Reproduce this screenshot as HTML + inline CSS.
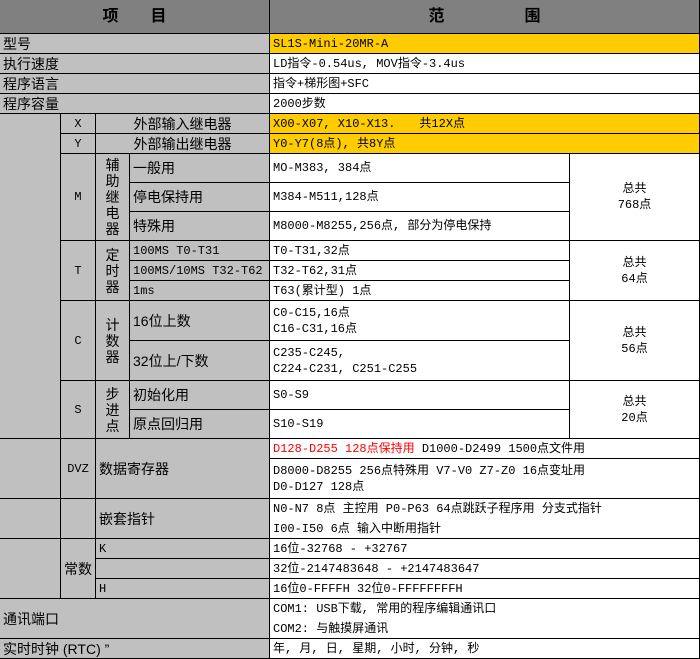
<!DOCTYPE html>
<html><head><meta charset="utf-8"><style>
body{margin:0;width:700px;height:659px;background:#fff;position:relative;overflow:hidden;font-family:"Liberation Sans","Noto Sans CJK SC",sans-serif;font-size:14px;color:#000}
#t{position:absolute;left:0;top:0;width:700px;height:659px;border-left:1px solid #000;border-top:1px solid #000;box-sizing:border-box}
.c{position:absolute;border-right:1px solid #000;border-bottom:1px solid #000;box-sizing:border-box;display:flex;align-items:center;overflow:hidden;white-space:nowrap;padding-left:3px;background:#c0c0c0;line-height:16px}
.w{background:#fff;font-family:"Liberation Mono","Noto Sans CJK SC",monospace;font-size:12px}
.y{background:#ffcc00;font-family:"Liberation Mono","Noto Sans CJK SC",monospace;font-size:12px}
.h{background:#808080;justify-content:center;font-weight:bold;font-size:16px;padding:0}
.ct{justify-content:center;padding:0;text-align:center}
.m{font-family:"Liberation Mono","Noto Sans CJK SC",monospace;font-size:12px}
.r{color:#f00}
</style></head><body><div id="t"></div>
<div class="c h" style="left:0;top:0;width:270px;height:34px">项　　目</div>
<div class="c h" style="left:270px;top:0;width:430px;height:34px">范　　　　　围</div>

<div class="c" style="left:0;top:34px;width:270px;height:20px">型号</div>
<div class="c y" style="left:270px;top:34px;width:430px;height:20px">SL1S-Mini-20MR-A</div>
<div class="c" style="left:0;top:54px;width:270px;height:20px">执行速度</div>
<div class="c w" style="left:270px;top:54px;width:430px;height:20px">LD指令-0.54us, MOV指令-3.4us</div>
<div class="c" style="left:0;top:74px;width:270px;height:20px">程序语言</div>
<div class="c w" style="left:270px;top:74px;width:430px;height:20px">指令+梯形图+SFC</div>
<div class="c" style="left:0;top:94px;width:270px;height:20px">程序容量</div>
<div class="c w" style="left:270px;top:94px;width:430px;height:20px">2000步数</div>

<div class="c" style="left:0;top:114px;width:61px;height:325px"></div>
<div class="c ct m" style="left:61px;top:114px;width:35px;height:20px">X</div>
<div class="c ct" style="left:96px;top:114px;width:174px;height:20px">外部输入继电器</div>
<div class="c y" style="left:270px;top:114px;width:430px;height:20px">X00-X07, X10-X13.　　共12X点</div>
<div class="c ct m" style="left:61px;top:134px;width:35px;height:20px">Y</div>
<div class="c ct" style="left:96px;top:134px;width:174px;height:20px">外部输出继电器</div>
<div class="c y" style="left:270px;top:134px;width:430px;height:20px">Y0-Y7(8点), 共8Y点</div>

<div class="c ct m" style="left:61px;top:154px;width:35px;height:87px">M</div>
<div class="c ct" style="left:96px;top:154px;width:34px;height:87px">辅<br>助<br>继<br>电<br>器</div>
<div class="c" style="left:130px;top:154px;width:140px;height:29px">一般用</div>
<div class="c" style="left:130px;top:183px;width:140px;height:29px">停电保持用</div>
<div class="c" style="left:130px;top:212px;width:140px;height:29px">特殊用</div>
<div class="c w" style="left:270px;top:154px;width:300px;height:29px">MO-M383, 384点</div>
<div class="c w" style="left:270px;top:183px;width:300px;height:29px">M384-M511,128点</div>
<div class="c w" style="left:270px;top:212px;width:300px;height:29px">M8000-M8255,256点, 部分为停电保持</div>
<div class="c w ct" style="left:570px;top:154px;width:130px;height:87px">总共<br>768点</div>

<div class="c ct m" style="left:61px;top:241px;width:35px;height:60px">T</div>
<div class="c ct" style="left:96px;top:241px;width:34px;height:60px">定<br>时<br>器</div>
<div class="c m" style="left:130px;top:241px;width:140px;height:20px">100MS T0-T31</div>
<div class="c m" style="left:130px;top:261px;width:140px;height:20px">100MS/10MS T32-T62</div>
<div class="c m" style="left:130px;top:281px;width:140px;height:20px">1ms</div>
<div class="c w" style="left:270px;top:241px;width:300px;height:20px">T0-T31,32点</div>
<div class="c w" style="left:270px;top:261px;width:300px;height:20px">T32-T62,31点</div>
<div class="c w" style="left:270px;top:281px;width:300px;height:20px">T63(累计型) 1点</div>
<div class="c w ct" style="left:570px;top:241px;width:130px;height:60px">总共<br>64点</div>

<div class="c ct m" style="left:61px;top:301px;width:35px;height:80px">C</div>
<div class="c ct" style="left:96px;top:301px;width:34px;height:80px">计<br>数<br>器</div>
<div class="c" style="left:130px;top:301px;width:140px;height:40px">16位上数</div>
<div class="c" style="left:130px;top:341px;width:140px;height:40px">32位上/下数</div>
<div class="c w" style="left:270px;top:301px;width:300px;height:40px">C0-C15,16点<br>C16-C31,16点</div>
<div class="c w" style="left:270px;top:341px;width:300px;height:40px;align-items:flex-end;padding-bottom:3px">C235-C245,<br>C224-C231, C251-C255</div>
<div class="c w ct" style="left:570px;top:301px;width:130px;height:80px">总共<br>56点</div>

<div class="c ct m" style="left:61px;top:381px;width:35px;height:58px">S</div>
<div class="c ct" style="left:96px;top:381px;width:34px;height:58px">步<br>进<br>点</div>
<div class="c" style="left:130px;top:381px;width:140px;height:29px">初始化用</div>
<div class="c" style="left:130px;top:410px;width:140px;height:29px">原点回归用</div>
<div class="c w" style="left:270px;top:381px;width:300px;height:29px">S0-S9</div>
<div class="c w" style="left:270px;top:410px;width:300px;height:29px">S10-S19</div>
<div class="c w ct" style="left:570px;top:381px;width:130px;height:58px">总共<br>20点</div>

<div class="c" style="left:0;top:439px;width:61px;height:60px"></div>
<div class="c ct m" style="left:61px;top:439px;width:35px;height:60px">DVZ</div>
<div class="c" style="left:96px;top:439px;width:174px;height:60px">数据寄存器</div>
<div class="c w" style="left:270px;top:439px;width:430px;height:20px"><span class="r">D128-D255 128点保持用</span>&nbsp;D1000-D2499 1500点文件用</div>
<div class="c w" style="left:270px;top:459px;width:430px;height:40px">D8000-D8255 256点特殊用 V7-V0 Z7-Z0 16点变址用<br>D0-D127 128点</div>

<div class="c" style="left:0;top:499px;width:61px;height:40px"></div>
<div class="c" style="left:61px;top:499px;width:35px;height:40px"></div>
<div class="c" style="left:96px;top:499px;width:174px;height:40px">嵌套指针</div>
<div class="c w" style="left:270px;top:499px;width:430px;height:40px;line-height:20px">N0-N7 8点 主控用 P0-P63 64点跳跃子程序用 分支式指针<br>I00-I50 6点 输入中断用指针</div>

<div class="c" style="left:0;top:539px;width:61px;height:60px"></div>
<div class="c ct" style="left:61px;top:539px;width:35px;height:60px">常数</div>
<div class="c m" style="left:96px;top:539px;width:174px;height:20px">K</div>
<div class="c" style="left:96px;top:559px;width:174px;height:20px"></div>
<div class="c m" style="left:96px;top:579px;width:174px;height:20px">H</div>
<div class="c w" style="left:270px;top:539px;width:430px;height:20px">16位-32768 - +32767</div>
<div class="c w" style="left:270px;top:559px;width:430px;height:20px">32位-2147483648 - +2147483647</div>
<div class="c w" style="left:270px;top:579px;width:430px;height:20px">16位0-FFFFH 32位0-FFFFFFFFH</div>

<div class="c" style="left:0;top:599px;width:270px;height:40px">通讯端口</div>
<div class="c w" style="left:270px;top:599px;width:430px;height:40px;line-height:20px">COM1: USB下载, 常用的程序编辑通讯口<br>COM2: 与触摸屏通讯</div>
<div class="c" style="left:0;top:639px;width:270px;height:20px">实时时钟 (RTC) ”</div>
<div class="c w" style="left:270px;top:639px;width:430px;height:20px">年, 月, 日, 星期, 小时, 分钟, 秒</div>
</body></html>
